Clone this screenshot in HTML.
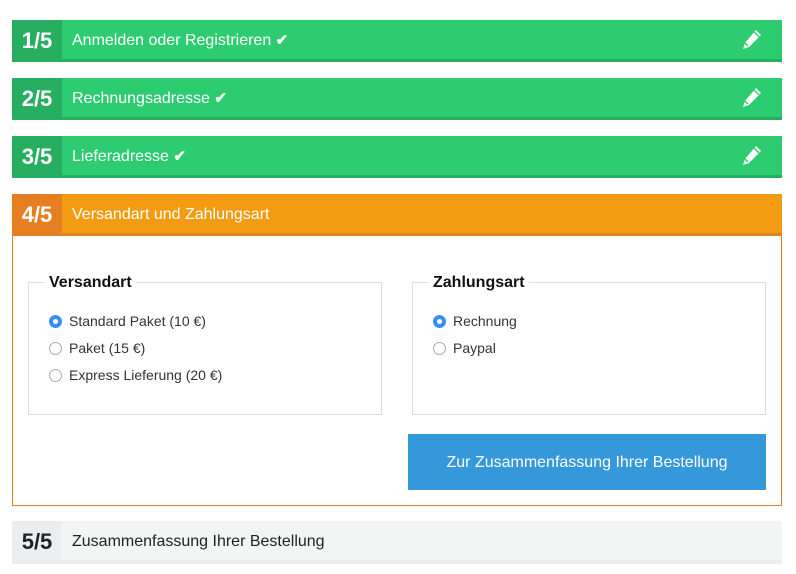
<!DOCTYPE html>
<html><head><meta charset="utf-8"><style>
*{margin:0;padding:0;box-sizing:border-box}
body{width:796px;height:574px;background:#fff;font-family:"Liberation Sans",sans-serif;position:relative;overflow:hidden}
.bar{position:absolute;left:12px;width:770px;height:42px;background:#2ecc71;border-bottom:3px solid #27ae60;color:#fff}
.num{position:absolute;left:0;top:0;width:50px;height:39px;background:#27ae60;font-weight:bold;font-size:22px;line-height:42px;text-align:center}
.t{position:absolute;left:60px;top:0;line-height:42px;font-size:16px}
.ck{font-weight:bold;font-size:15px}
.pen{position:absolute;right:20px;top:9px}
.fs{position:absolute;top:282px;height:133px;border:1px solid #ddd}
.lg{position:absolute;top:-10px;left:16px;background:#fff;padding:0 4px;font-weight:bold;font-size:16px;color:#111;line-height:20px}
.r{position:absolute;left:20px;font-size:14px;color:#333;line-height:18px}
.rb{display:inline-block;width:13px;height:13px;border:1px solid #aaa;border-radius:50%;vertical-align:-2px;margin-right:7px;background:#fff}
.rb.on{border:4px solid #3b8ff0;background:#fff}
</style></head><body>
<div class="bar" style="top:20px"><div class="num">1/5</div><div class="t">Anmelden oder Registrieren <span class="ck">✔</span></div><svg class="pen" width="22" height="22" viewBox="0 0 22 22"><path d="M16 1l5 5-12 12-6 2 2-6z" fill="#fff"/><path d="M14 3l5 5M5 14l3 3" stroke="#2ecc71" stroke-width="1.4"/></svg></div>
<div class="bar" style="top:78px"><div class="num">2/5</div><div class="t">Rechnungsadresse <span class="ck">✔</span></div><svg class="pen" width="22" height="22" viewBox="0 0 22 22"><path d="M16 1l5 5-12 12-6 2 2-6z" fill="#fff"/><path d="M14 3l5 5M5 14l3 3" stroke="#2ecc71" stroke-width="1.4"/></svg></div>
<div class="bar" style="top:136px"><div class="num">3/5</div><div class="t">Lieferadresse <span class="ck">✔</span></div><svg class="pen" width="22" height="22" viewBox="0 0 22 22"><path d="M16 1l5 5-12 12-6 2 2-6z" fill="#fff"/><path d="M14 3l5 5M5 14l3 3" stroke="#2ecc71" stroke-width="1.4"/></svg></div>
<div style="position:absolute;left:12px;top:194px;width:770px;height:312px;border:1px solid #e67e22"></div>
<div class="bar" style="top:194px;background:#f39c12;border-bottom-color:#e67e22"><div class="num" style="background:#e67e22">4/5</div><div class="t">Versandart und Zahlungsart</div></div>
<div class="fs" style="left:28px;width:354px"><div class="lg">Versandart</div>
<div class="r" style="top:29px"><span class="rb on"></span>Standard Paket (10 €)</div>
<div class="r" style="top:56px"><span class="rb"></span>Paket (15 €)</div>
<div class="r" style="top:83px"><span class="rb"></span>Express Lieferung (20 €)</div></div>
<div class="fs" style="left:412px;width:354px"><div class="lg">Zahlungsart</div>
<div class="r" style="top:29px"><span class="rb on"></span>Rechnung</div>
<div class="r" style="top:56px"><span class="rb"></span>Paypal</div></div>
<div style="position:absolute;left:408px;top:434px;width:358px;height:56px;background:#3498db;color:#fff;font-size:16px;line-height:58px;text-align:center">Zur Zusammenfassung Ihrer Bestellung</div>
<div class="bar" style="top:521px;height:43px;background:#f3f4f4;border-bottom:4px solid #ebeeef;color:#222"><div class="num" style="background:#ebeeef;color:#222">5/5</div><div class="t">Zusammenfassung Ihrer Bestellung</div></div>
</body></html>
